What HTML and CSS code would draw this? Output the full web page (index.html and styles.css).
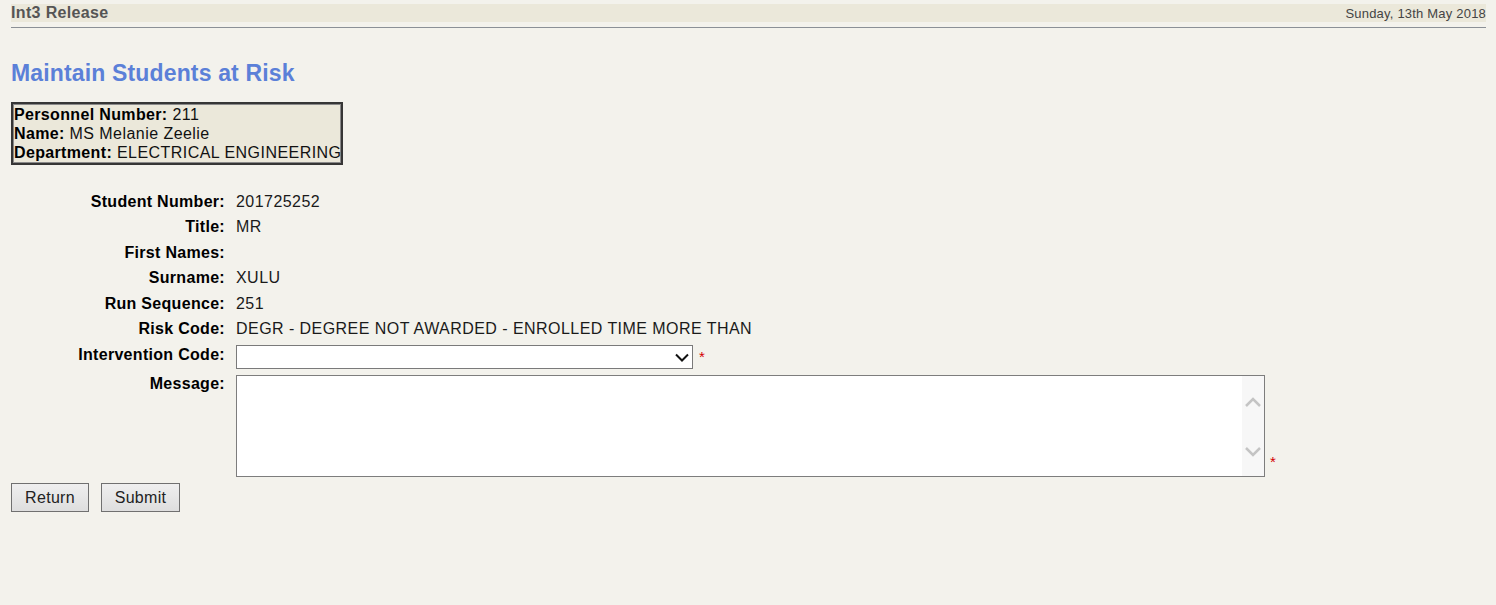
FILE: index.html
```html
<!DOCTYPE html>
<html lang="en">
<head>
    <meta charset="UTF-8">
    <title>Maintain Students at Risk</title>
    <link rel="stylesheet" href="styles.css">
</head>
<body>

    <div class="topbar">
        <span class="release">Int3 Release</span>
        <span class="date">Sunday, 13th May 2018</span>
    </div>
    <div class="topline"></div>

    <h1>Maintain Students at Risk</h1>

    <div class="staff-box">
        <div><b>Personnel Number:</b> 211</div>
        <div><b>Name:</b> MS Melanie Zeelie</div>
        <div><b>Department:</b> ELECTRICAL ENGINEERING</div>
    </div>

    <div class="details">
        <div class="label">Student Number:</div>
        <div class="value">201725252</div>

        <div class="label">Title:</div>
        <div class="value">MR</div>

        <div class="label">First Names:</div>
        <div class="value"></div>

        <div class="label">Surname:</div>
        <div class="value">XULU</div>

        <div class="label">Run Sequence:</div>
        <div class="value">251</div>

        <div class="label">Risk Code:</div>
        <div class="value">DEGR - DEGREE NOT AWARDED - ENROLLED TIME MORE THAN</div>

        <div class="label label-select">Intervention Code:</div>
        <div class="field field-select">
            <div class="select-wrap">
                <select class="select">
                    <option></option>
                </select>
                <svg class="select-arrow" width="14" height="9" viewBox="0 0 14 9">
                    <path d="M1 1.5 L7 7.5 L13 1.5" fill="none" stroke="#111" stroke-width="2"/>
                </svg>
            </div>
            <span class="req">*</span>
        </div>

        <div class="label label-message">Message:</div>
        <div class="field field-message">
            <div class="memo">
                <textarea class="memo-text"></textarea>
                <div class="memo-scroll">
                    <svg width="18" height="12" viewBox="0 0 18 12">
                        <path d="M2 10 L9 3 L16 10" fill="none" stroke="#c4c4c4" stroke-width="2.5"/>
                    </svg>
                    <svg width="18" height="12" viewBox="0 0 18 12">
                        <path d="M2 2 L9 9 L16 2" fill="none" stroke="#c4c4c4" stroke-width="2.5"/>
                    </svg>
                </div>
            </div>
            <span class="req">*</span>
        </div>
    </div>

    <div class="buttons">
        <button class="btn btn-return">Return</button>
        <button class="btn btn-submit">Submit</button>
    </div>

</body>
</html>
```

FILE: styles.css
```css
body {
    font-family: "Liberation Sans", Arial, sans-serif;
    font-size: 16px;
    letter-spacing: 0.45px;
    color: #1a1a1a;
    margin: 0;
    padding: 4px 10px 0 11px;
    background: #f3f2ec;
}

b {
    letter-spacing: 0.35px;
}

.topbar {
    height: 18px;
    background: #ebe8da;
    display: flex;
    justify-content: space-between;
    align-items: center;
}

.release {
    font-weight: bold;
    font-size: 16px;
    letter-spacing: 0.35px;
    color: #555;
}

.date {
    font-size: 13px;
    letter-spacing: 0.2px;
    color: #444;
}

.topline {
    margin-top: 5px;
    height: 1px;
    background: #8b9096;
}

h1 {
    margin: 32px 0 0;
    font-size: 23px;
    line-height: 26px;
    letter-spacing: 0.15px;
    font-weight: bold;
    color: #5b80d8;
}

.staff-box {
    display: inline-block;
    margin-top: 16px;
    padding: 1px 0 1px 1px;
    background: #ebe8da;
    border: 2px solid #363636;
    box-shadow: inset 0 0 0 1px #8a8a8a;
    line-height: 19px;
    color: #111;
}

.staff-box b {
    color: #000;
}

.details {
    display: grid;
    grid-template-columns: 214px 1fr;
    column-gap: 11px;
    margin-top: 24px;
}

.label {
    text-align: right;
    font-weight: bold;
    letter-spacing: 0.3px;
    color: #000;
    line-height: 25.4px;
}

.value {
    line-height: 25.4px;
    color: #1a1a1a;
}

.label-select {
    margin-top: 4px;
    line-height: 18px;
    padding-top: 1px;
}

.field {
    display: flex;
}

.field-select {
    margin-top: 4px;
    align-items: flex-start;
}

.select-wrap {
    position: relative;
    width: 457px;
    height: 24px;
}

.select {
    appearance: none;
    -webkit-appearance: none;
    width: 100%;
    height: 100%;
    margin: 0;
    border: 1px solid #7a7a7a;
    border-radius: 0;
    background: white;
    font-family: inherit;
    font-size: 16px;
}

.select-arrow {
    position: absolute;
    right: 4px;
    top: 8px;
    pointer-events: none;
}

.req {
    color: #d40000;
    font-size: 15px;
    line-height: 14px;
    margin-left: 6px;
    padding-top: 5px;
}

.label-message {
    margin-top: 6px;
    line-height: 18px;
}

.field-message {
    margin-top: 6px;
    align-items: flex-end;
}

.field-message .req {
    margin-left: 5px;
    margin-bottom: 8px;
    padding-top: 0;
}

.memo {
    display: flex;
    width: 1027px;
    height: 100px;
    border: 1px solid #7d7d7d;
    background: white;
}

.memo-text {
    flex: 1;
    border: none;
    resize: none;
    outline: none;
    margin: 0;
    padding: 2px;
    font-family: inherit;
    font-size: 16px;
}

.memo-scroll {
    width: 22px;
    background: #f7f7f7;
    display: flex;
    flex-direction: column;
    justify-content: space-between;
    align-items: center;
    padding: 20px 0 18px;
}

.buttons {
    display: flex;
    gap: 12px;
    margin-top: 6px;
}

.btn {
    height: 29px;
    padding: 0;
    border: 1px solid #707070;
    border-radius: 0;
    background: linear-gradient(#efefef, #dedede);
    font-family: inherit;
    font-size: 16px;
    letter-spacing: 0.3px;
    color: #222;
    cursor: pointer;
}

.btn-return {
    width: 78px;
}

.btn-submit {
    width: 79px;
}
```
